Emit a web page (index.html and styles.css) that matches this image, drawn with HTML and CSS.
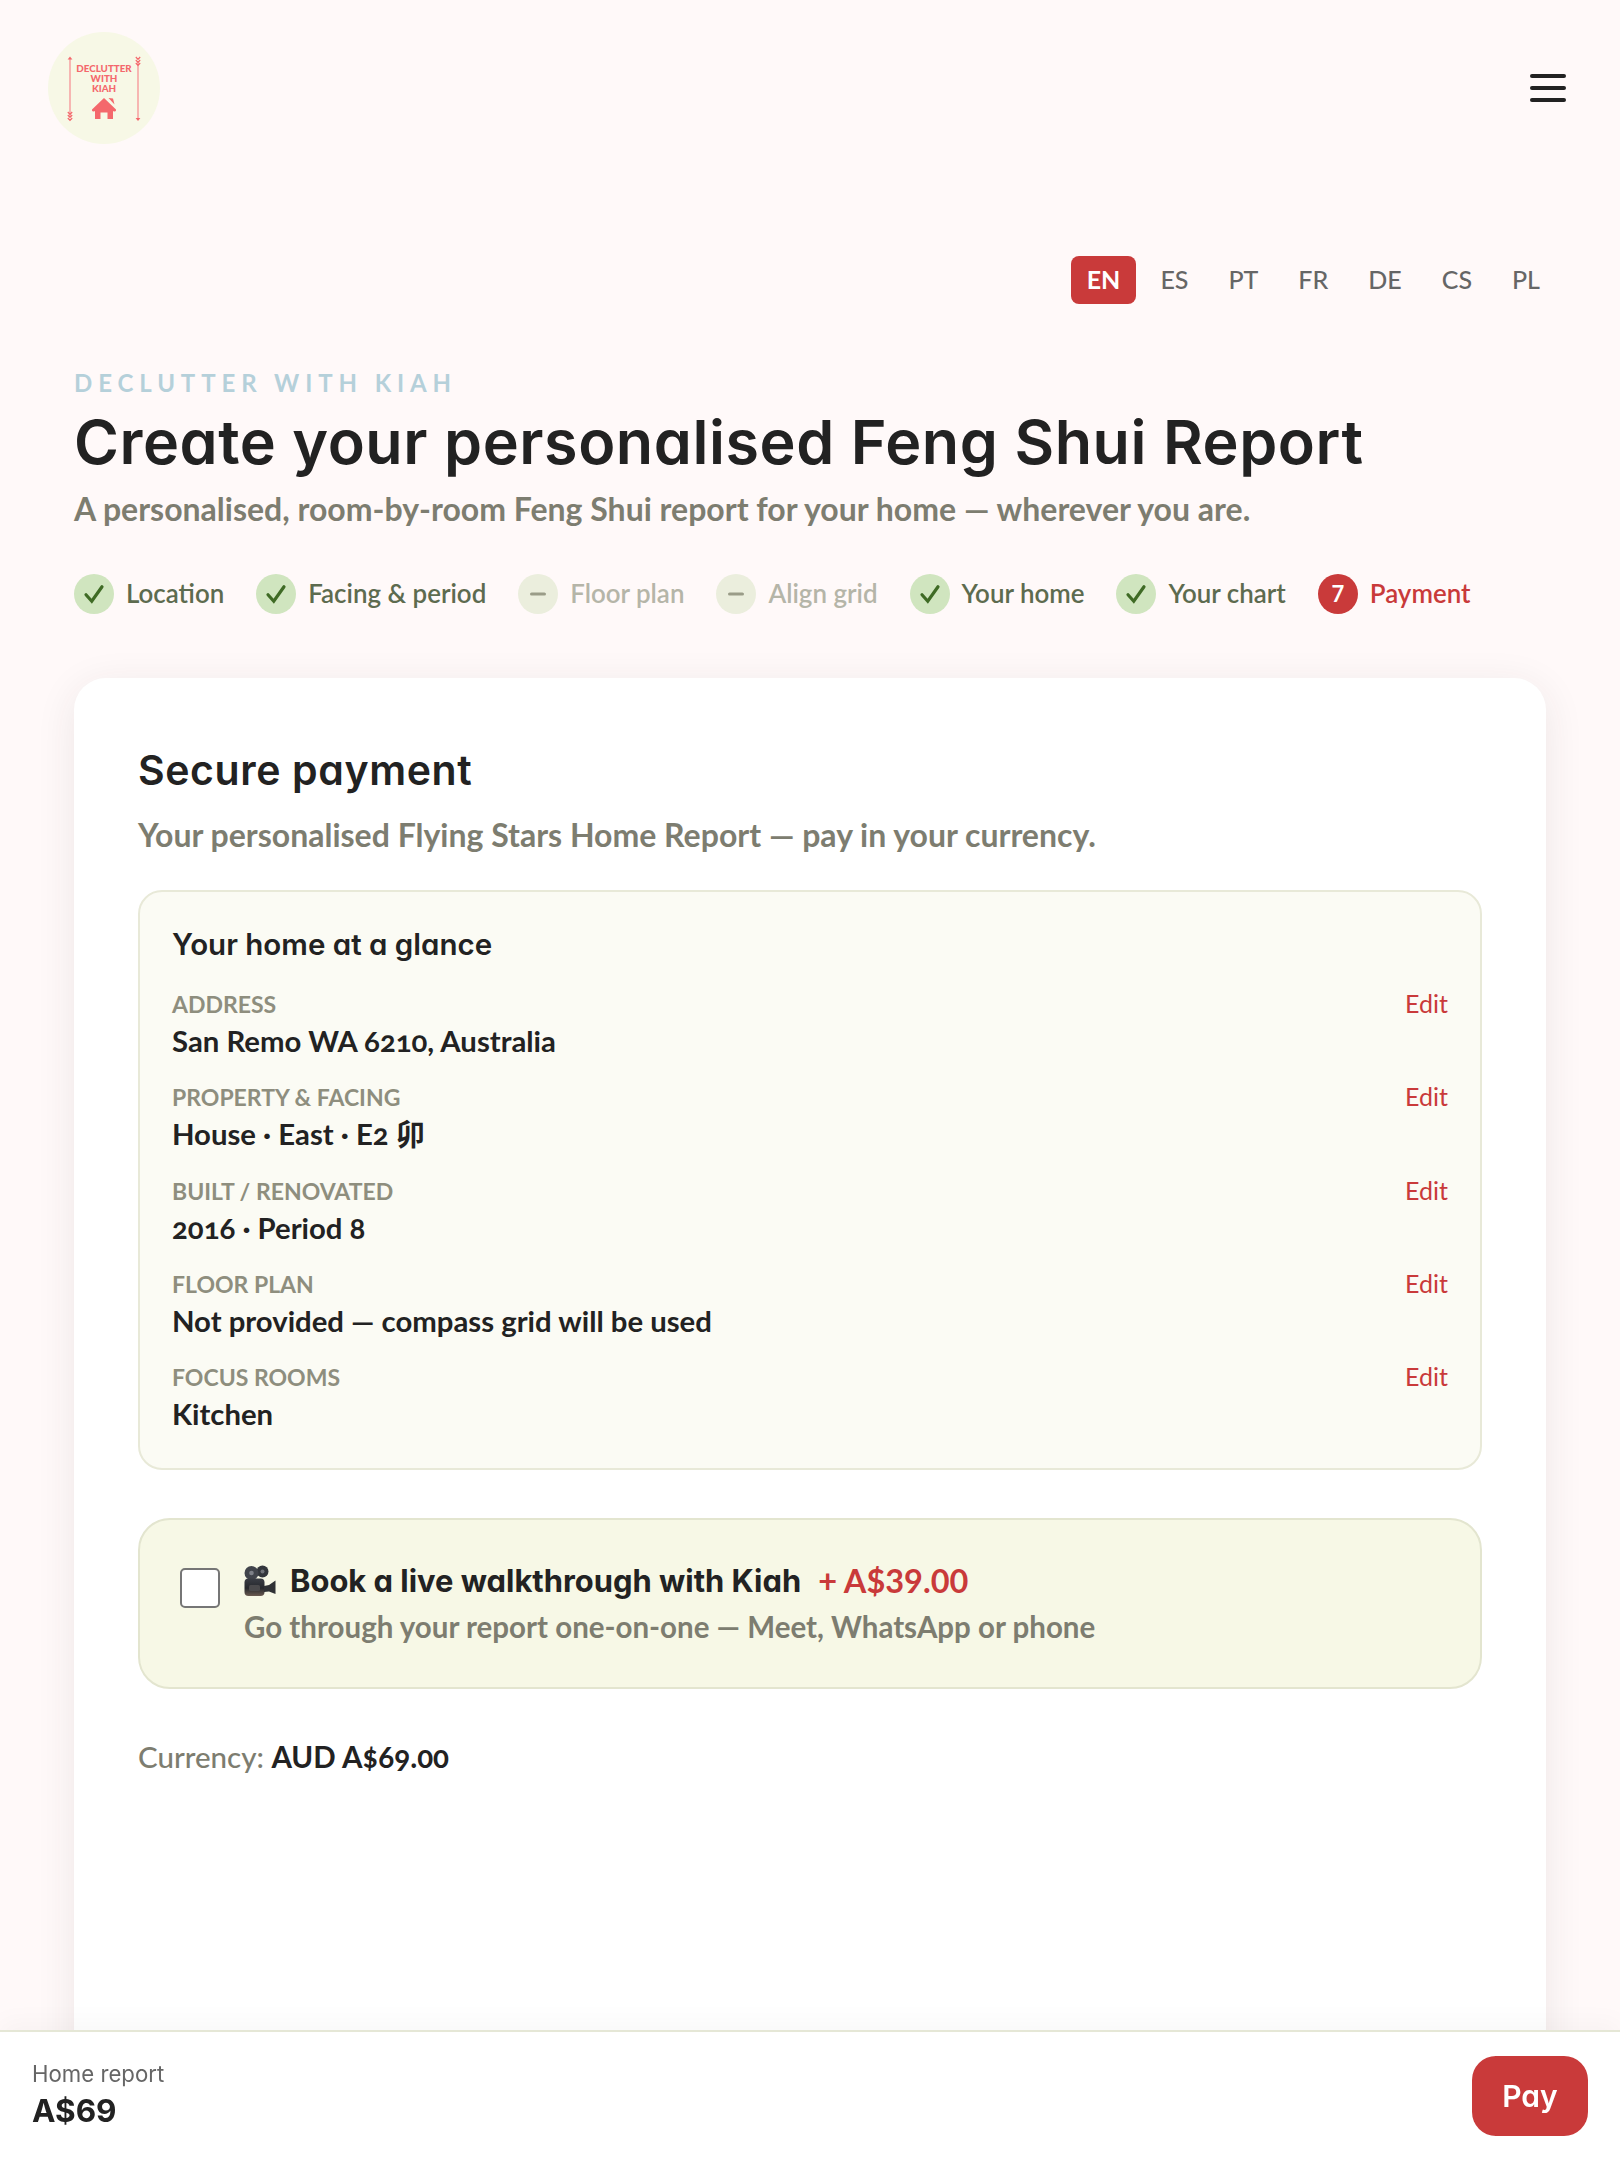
FILE: index.html
```html
<!DOCTYPE html>
<html lang="en">
<head>
    <meta charset="UTF-8">
    <meta name="viewport" content="width=device-width, initial-scale=1.0">
    <title>Feng Shui Report - Payment</title>
    <link rel="stylesheet" href="styles.css">
</head>
<body>
    <header class="site-header">
        <svg class="logo" viewBox="0 0 112 112" role="img" aria-label="Declutter with Kiah">
            <circle cx="56" cy="56" r="56" fill="#f7f8e6"/>
            <g stroke="#f6a5a5" stroke-width="1.6" fill="none">
                <path d="M22 27V85"/>
                <path d="M90 29V86"/>
            </g>
            <g fill="#f4686c">
                <path d="M22 24.500l2.400 3h-4.800z"/>
                <path d="M90 89l-2.400-3h4.800z"/>
            </g>
            <g stroke="#f4686c" stroke-width="1.200" fill="none">
                <path d="M19.800 80l2.200 2.400 2.200-2.400M19.800 83l2.200 2.400 2.200-2.400M19.800 86l2.200 2.400 2.200-2.400"/>
                <path d="M87.800 25l2.200 2.400 2.200-2.400M87.800 28l2.200 2.400 2.200-2.400M87.800 31l2.200 2.400 2.200-2.400"/>
            </g>
            <g class="logo-text" text-anchor="middle" fill="#f4686c">
                <text x="56" y="40">DECLUTTER</text>
                <text x="56" y="50">WITH</text>
                <text x="56" y="60">KIAH</text>
            </g>
            <path fill="#f4686c" d="M56 66 L68 77.500 Q68.500 80 66 79.500 L65 79 V87 H59.500 V80.500 H52.500 V87 H47 V79 L46 79.500 Q43.500 80 44 77.500Z"/>
            <path fill="#f4686c" d="M60.500 66 L65 66.500 L66.500 72.500Z"/>
        </svg>
        <button class="menu-btn" aria-label="Menu"><span></span><span></span><span></span></button>
    </header>

    <nav class="lang-row">
        <a class="lang active">EN</a>
        <a class="lang">ES</a>
        <a class="lang">PT</a>
        <a class="lang">FR</a>
        <a class="lang">DE</a>
        <a class="lang">CS</a>
        <a class="lang">PL</a>
    </nav>

    <main class="page">
        <p class="eyebrow">DECLUTTER WITH KIAH</p>
        <h1>Create your personalised Feng Shui Report</h1>
        <p class="lead">A personalised, room-by-room Feng Shui report for your home — wherever you are.</p>

        <ol class="steps">
            <li class="step done"><span class="dot"><svg viewBox="0 0 20 20"><path d="M5 10.500l3.600 4L15 5.500"/></svg></span>Location</li>
            <li class="step done"><span class="dot"><svg viewBox="0 0 20 20"><path d="M5 10.500l3.600 4L15 5.500"/></svg></span>Facing &amp; period</li>
            <li class="step skipped"><span class="dot"><svg viewBox="0 0 20 20"><path d="M6 10h8"/></svg></span>Floor plan</li>
            <li class="step skipped"><span class="dot"><svg viewBox="0 0 20 20"><path d="M6 10h8"/></svg></span>Align grid</li>
            <li class="step done"><span class="dot"><svg viewBox="0 0 20 20"><path d="M5 10.500l3.600 4L15 5.500"/></svg></span>Your home</li>
            <li class="step done"><span class="dot"><svg viewBox="0 0 20 20"><path d="M5 10.500l3.600 4L15 5.500"/></svg></span>Your chart</li>
            <li class="step current"><span class="dot">7</span>Payment</li>
        </ol>

        <section class="card">
            <h2>Secure payment</h2>
            <p class="card-sub">Your personalised Flying Stars Home Report — pay in your currency.</p>

            <div class="glance">
                <h3>Your home at a glance</h3>
                <div class="glance-row">
                    <div><div class="glance-label">ADDRESS</div><div class="glance-value">San Remo WA 6210, Australia</div></div>
                    <a class="edit">Edit</a>
                </div>
                <div class="glance-row">
                    <div><div class="glance-label">PROPERTY &amp; FACING</div><div class="glance-value">House · East · E2 卯</div></div>
                    <a class="edit">Edit</a>
                </div>
                <div class="glance-row">
                    <div><div class="glance-label">BUILT / RENOVATED</div><div class="glance-value">2016 · Period 8</div></div>
                    <a class="edit">Edit</a>
                </div>
                <div class="glance-row">
                    <div><div class="glance-label">FLOOR PLAN</div><div class="glance-value">Not provided — compass grid will be used</div></div>
                    <a class="edit">Edit</a>
                </div>
                <div class="glance-row">
                    <div><div class="glance-label">FOCUS ROOMS</div><div class="glance-value">Kitchen</div></div>
                    <a class="edit">Edit</a>
                </div>
            </div>

            <label class="addon">
                <span class="checkbox"></span>
                <span class="addon-text">
                    <span class="addon-title">
                        <svg class="camera" viewBox="0 0 32 32">
                            <defs>
                                <linearGradient id="cam-body" x1="0" y1="0" x2="0" y2="1">
                                    <stop offset="0" stop-color="#3a3d44"/>
                                    <stop offset="0.550" stop-color="#26282d"/>
                                    <stop offset="1" stop-color="#6a5a50"/>
                                </linearGradient>
                            </defs>
                            <circle cx="18.500" cy="6.500" r="6" fill="#33363c"/>
                            <circle cx="18.500" cy="6.500" r="2" fill="#70737a"/>
                            <circle cx="7.500" cy="8" r="7" fill="#41444b"/>
                            <circle cx="7.500" cy="8" r="2.300" fill="#7e8188"/>
                            <rect x="0.500" y="13.500" width="20" height="17.500" rx="4" fill="url(#cam-body)"/>
                            <rect x="5" y="20" width="11" height="6" rx="1.500" fill="#4b4a4c"/>
                            <path d="M20 21l5-1 6.500-4.500V29L25 26.500l-5 .5z" fill="#2f3135"/>
                        </svg>
                        <strong>Book a live walkthrough with Kiah</strong>
                        <em>+ A$39.00</em>
                    </span>
                    <span class="addon-sub">Go through your report one-on-one — Meet, WhatsApp or phone</span>
                </span>
            </label>

            <p class="currency">Currency: <b>AUD A$69.00</b></p>
        </section>
    </main>

    <footer class="pay-bar">
        <div>
            <div class="pay-name">Home report</div>
            <div class="pay-price">A$69</div>
        </div>
        <button class="pay-btn">Pay</button>
    </footer>
</body>
</html>
```

FILE: styles.css
```css
html, body {
    height: 100%;
}
body {
    margin: 0;
    height: 2160px;
    overflow: hidden;
    display: flex;
    flex-direction: column;
    background: #fff9f9;
    color: #222222;
    font-family: Lato, "Noto Sans CJK SC", sans-serif;
}
h1, h2, h3, p, ol {
    margin: 0;
    padding: 0;
}
.site-header {
    display: flex;
    justify-content: space-between;
    align-items: center;
    padding: 32px 54px 0 48px;
}
.logo {
    width: 112px;
    height: 112px;
    display: block;
}
.logo-text {
    font-family: Lato, sans-serif;
    font-weight: 900;
    font-size: 9.800px;
}
.menu-btn {
    display: flex;
    flex-direction: column;
    gap: 8px;
    width: 36px;
    padding: 0;
    border: 0;
    background: none;
}
.menu-btn span {
    height: 4px;
    border-radius: 2px;
    background: #222222;
}
.lang-row {
    display: flex;
    justify-content: flex-end;
    gap: 8px;
    padding: 0 64px;
    margin-top: 112px;
}
.lang {
    height: 48px;
    padding: 0 16px;
    border-radius: 8px;
    font-size: 25px;
    font-weight: 500;
    line-height: 47px;
    color: #666666;
}
.lang.active {
    background: #c93a3a;
    color: white;
    font-weight: 700;
}
.page {
    flex: 1;
    display: flex;
    flex-direction: column;
    padding: 0 74px;
    margin-top: 64px;
}
.eyebrow {
    font-size: 24px;
    line-height: 30px;
    font-weight: 700;
    letter-spacing: 5.900px;
    color: #b5d0da;
}
h1 {
    margin-top: 8px;
    font-family: Inter, sans-serif;
    font-feature-settings: "cv11";
    font-size: 61px;
    line-height: 72px;
    font-weight: 600;
    letter-spacing: 0.570px;
    color: #222222;
}
.lead {
    margin-top: 9px;
    font-size: 32px;
    line-height: 44px;
    font-weight: 700;
    color: #7d7d70;
}
.steps {
    display: flex;
    gap: 32px;
    margin-top: 43px;
    list-style: none;
}
.step {
    display: flex;
    align-items: flex-start;
    gap: 12px;
    font-size: 25.900px;
    font-weight: 600;
    line-height: 38px;
    height: 40px;
}
.dot {
    display: flex;
    align-items: center;
    justify-content: center;
    width: 40px;
    height: 40px;
    border-radius: 50%;
    font-size: 22px;
    font-weight: 700;
}
.dot svg {
    width: 32px;
    height: 32px;
    fill: none;
    stroke-width: 2;
    stroke-linecap: round;
}
.step.done { color: #5d6b4f; }
.step.done .dot { background: #d0e5bf; }
.step.done svg { stroke: #3f6b25; }
.step.skipped { color: #b5b5a8; }
.step.skipped .dot { background: #ebeedd; }
.step.skipped svg { stroke: #9a9c88; }
.step.current { color: #c93a3a; }
.step.current .dot { background: #c93a3a; color: white; }
.card {
    flex: 1;
    margin-top: 64px;
    padding: 66px 64px 0;
    background: white;
    border-radius: 32px 32px 0 0;
    box-shadow: 0 8px 40px rgba(60, 40, 40, 0.09);
}
h2 {
    font-family: Inter, sans-serif;
    font-feature-settings: "cv11";
    font-size: 41px;
    line-height: 52px;
    font-weight: 600;
    letter-spacing: 0.600px;
}
.card-sub {
    margin-top: 17px;
    font-size: 32px;
    line-height: 44px;
    font-weight: 700;
    color: #7d7d70;
}
.glance {
    margin-top: 33px;
    padding: 32px 32px 33.500px;
    background: #fbfbf4;
    border: 2px solid #e8e9d8;
    border-radius: 24px;
}
h3 {
    font-family: Inter, sans-serif;
    font-feature-settings: "cv11";
    font-size: 29.500px;
    line-height: 40px;
    font-weight: 600;
    margin-bottom: 26px;
}
.glance-row {
    display: flex;
    justify-content: space-between;
    align-items: flex-start;
    margin-top: 22.300px;
}
h3 + .glance-row {
    margin-top: 0;
}
.glance-label {
    font-size: 23px;
    line-height: 28px;
    font-weight: 700;
    color: #8e8e7e;
}
.glance-value {
    margin-top: 3px;
    font-size: 29.300px;
    line-height: 40px;
    font-weight: 700;
    font-variant-numeric: oldstyle-nums;
}
.edit {
    font-size: 25px;
    line-height: 26px;
    color: #c93a3a;
}
.addon {
    display: flex;
    gap: 24px;
    margin-top: 48px;
    padding: 39px 40px 40px;
    background: #f7f8e6;
    border: 2px solid #e3e5cf;
    border-radius: 32px;
}
.checkbox {
    flex: none;
    box-sizing: border-box;
    width: 40px;
    height: 40px;
    margin-top: 9px;
    background: white;
    border: 2px solid #767676;
    border-radius: 5px;
}
.addon-text {
    display: flex;
    flex-direction: column;
    gap: 4px;
}
.addon-title {
    display: flex;
    align-items: center;
    height: 44px;
    font-size: 32.500px;
}
.camera {
    width: 32px;
    height: 32px;
    margin-right: 14px;
}
.addon-title strong {
    font-family: Inter, sans-serif;
    font-feature-settings: "cv11";
    font-weight: 700;
    font-size: 30.900px;
}
.addon-title em {
    margin-left: 17px;
    font-style: normal;
    font-weight: 700;
    color: #c93a3a;
}
.addon-sub {
    font-size: 29.500px;
    line-height: 40px;
    font-weight: 700;
    color: #7d7d70;
}
.currency {
    margin-top: 48px;
    font-size: 29.500px;
    line-height: 40px;
    font-weight: 500;
    color: #7d7d70;
}
.currency b {
    color: #222222;
    font-variant-numeric: oldstyle-nums;
}
.pay-bar {
    position: fixed;
    left: 0;
    right: 0;
    bottom: 0;
    display: flex;
    justify-content: space-between;
    align-items: center;
    box-sizing: border-box;
    height: 130px;
    padding: 0 32px;
    background: rgba(255, 255, 255, 0.97);
    border-top: 2px solid #e5e7d6;
    box-shadow: 0 -8px 24px rgba(0, 0, 0, 0.03);
}
.pay-name {
    font-family: Inter, sans-serif;
    font-size: 22.200px;
    line-height: 29px;
    color: #666666;
}
.pay-price {
    font-family: Inter, sans-serif;
    font-size: 31.500px;
    line-height: 45px;
    font-weight: 700;
}
.pay-btn {
    width: 116px;
    height: 80px;
    border: 0;
    border-radius: 24px;
    background: #c93a3a;
    color: white;
    font-family: Inter, sans-serif;
    font-feature-settings: "cv11";
    font-size: 30px;
    font-weight: 600;
}
```
